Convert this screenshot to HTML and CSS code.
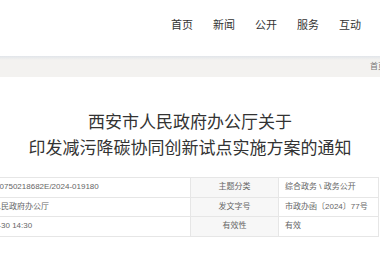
FILE: index.html
```html
<!DOCTYPE html>
<html lang="zh-CN">
<head>
    <meta charset="UTF-8">
    <meta name="viewport" content="width=device-width, initial-scale=1.0">
    <title>西安市人民政府办公厅关于印发减污降碳协同创新试点实施方案的通知</title>
    <link rel="stylesheet" href="styles.css">
</head>
<body>

<div class="header">
    <ul class="nav">
        <li>首页</li>
        <li>新闻</li>
        <li>公开</li>
        <li>服务</li>
        <li>互动</li>
    </ul>
</div>

<div class="crumbs">首页 &gt; 政务公开 &gt; 政策文件</div>

<h1 class="title">西安市人民政府办公厅关于<br>印发减污降碳协同创新试点实施方案的通知</h1>

<div class="info-wrap">
    <table class="info">
        <colgroup>
            <col class="col-label">
            <col class="col-value-wide">
            <col class="col-label">
            <col class="col-value">
        </colgroup>
        <tr>
            <td class="label">索 引 号</td>
            <td>11610100750218682E/2024-019180</td>
            <td class="label">主题分类</td>
            <td>综合政务 \ 政务公开</td>
        </tr>
        <tr>
            <td class="label">发布机构</td>
            <td>西安市人民政府办公厅</td>
            <td class="label">发文字号</td>
            <td>市政办函〔2024〕77号</td>
        </tr>
        <tr>
            <td class="label">成文日期</td>
            <td>2024-12-30 14:30</td>
            <td class="label">有效性</td>
            <td>有效</td>
        </tr>
    </table>
</div>

</body>
</html>
```

FILE: styles.css
```css
body {
    margin: 0;
    padding: 0;
    background-color: #fff;
    font-family: "Noto Sans CJK SC", "Liberation Sans", sans-serif;
    color: #333;
    overflow: hidden;
}

.header {
    height: 56px;
    background-color: #fff;
}

.nav {
    list-style: none;
    margin: 0;
    padding: 16px 19px 0 0;
    display: flex;
    justify-content: flex-end;
    gap: 20px;
}

.nav li {
    font-size: 11px;
    line-height: 16px;
    color: #333;
}

.crumbs {
    height: 21px;
    background: linear-gradient(#e1e5ea, #f3f2f0 4px);
    padding-left: 370px;
    overflow: hidden;
    white-space: nowrap;
    font-size: 8px;
    line-height: 20px;
    color: #777;
}

.title {
    margin: 31px 0 0;
    font-size: 17px;
    line-height: 26px;
    font-weight: normal;
    text-align: center;
    color: #333;
}

.info-wrap {
    margin-top: 17px;
}

.info {
    margin-left: -126px;
    border-collapse: collapse;
    table-layout: fixed;
    width: 505px;
}

.col-label {
    width: 88px;
}

.col-value-wide {
    width: 228px;
}

.col-value {
    width: 100px;
}

.info td {
    border: 1px solid #e6e6e6;
    padding: 0 6px;
    height: 18.5px;
    font-family: "Liberation Sans", "Noto Sans CJK SC", sans-serif;
    font-size: 8px;
    line-height: 18.5px;
    color: #666;
    white-space: nowrap;
    overflow: hidden;
}

.info td.label {
    background-color: #f7f7f7;
    text-align: center;
}
```
